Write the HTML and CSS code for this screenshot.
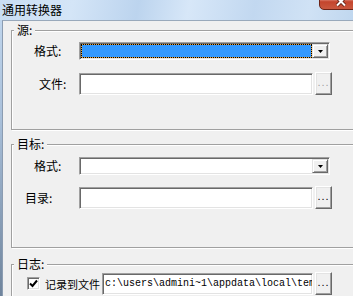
FILE: index.html
```html
<!DOCTYPE html>
<html lang="zh-CN">
<head>
    <meta charset="UTF-8">
    <title>通用转换器</title>
    <link rel="stylesheet" href="styles.css">
</head>
<body>

    <div class="window">
        <div class="titlebar">
            <span class="title">通用转换器</span>
            <span class="close-btn">
                <svg width="12" height="11" viewBox="0 0 12 11">
                    <path d="M2 1.5 L10 9.5 M10 1.5 L2 9.5" stroke="#5a1a0e" stroke-width="3.6" fill="none"/>
                    <path d="M2 1.5 L10 9.5 M10 1.5 L2 9.5" stroke="#ffffff" stroke-width="2" fill="none"/>
                </svg>
            </span>
        </div>

        <div class="client">
            <!-- 源 -->
            <div class="group group-src">
                <div class="legend">源:</div>
                <div class="row row-combo-src">
                    <span class="label label-format">格式:</span>
                    <div class="combo">
                        <div class="combo-value selected"></div>
                        <div class="combo-btn">
                            <svg width="5" height="3" viewBox="0 0 5 3"><polygon points="0,0 5,0 2.5,3" fill="#000"/></svg>
                        </div>
                    </div>
                </div>
                <div class="row row-edit-src">
                    <span class="label label-file">文件:</span>
                    <div class="edit"></div>
                    <button class="browse disabled">...</button>
                </div>
            </div>

            <!-- 目标 -->
            <div class="group group-dst">
                <div class="legend">目标:</div>
                <div class="row row-combo-dst">
                    <span class="label label-format">格式:</span>
                    <div class="combo">
                        <div class="combo-value"></div>
                        <div class="combo-btn">
                            <svg width="5" height="3" viewBox="0 0 5 3"><polygon points="0,0 5,0 2.5,3" fill="#000"/></svg>
                        </div>
                    </div>
                </div>
                <div class="row row-edit-dst">
                    <span class="label label-dir">目录:</span>
                    <div class="edit"></div>
                    <button class="browse">...</button>
                </div>
            </div>

            <!-- 日志 -->
            <div class="group group-log">
                <div class="legend">日志:</div>
                <div class="row row-log">
                    <span class="check">
                        <svg width="9" height="9" viewBox="0 0 9 9"><path d="M1 4.5 L3.5 7 L8 1.5" stroke="#000" stroke-width="2" fill="none"/></svg>
                    </span>
                    <span class="check-label">记录到文件</span>
                    <div class="edit edit-log">c:\users\admini~1\appdata\local\temp\convert.log</div>
                    <button class="browse">...</button>
                </div>
            </div>
        </div>
    </div>

</body>
</html>
```

FILE: styles.css
```css
/* Dialog "通用转换器" - gaya Windows 7 klasik */
html, body {
    margin: 0;
    padding: 0;
}

body {
    width: 353px;
    height: 296px;
    overflow: hidden;
    background: #f0f0f0;
    font-family: "Noto Sans CJK SC", sans-serif;
    font-size: 12px;
    color: #000;
}

.window {
    width: 362px;
    height: 296px;
    display: flex;
    flex-direction: column;
    background: linear-gradient(to bottom, #c3d9f0 0%, #a9c0da 40%, #6f849c 100%);
}

/* Title bar */
.titlebar {
    height: 20px;
    flex-shrink: 0;
    display: flex;
    align-items: flex-start;
    background: linear-gradient(100deg, #c8ddf3 0%, #d4e5f7 20%, #bcd4ee 38%, #d7e7f8 52%, #c2d8f0 70%, #d0e2f5 85%, #bdd5ee 100%);
}

.title {
    padding: 2px 0 0 2px;
    line-height: 16px;
    font-size: 12px;
}

.close-btn {
    margin-left: auto;
    margin-top: -8px;
    width: 43px;
    height: 18px;
    box-sizing: border-box;
    display: flex;
    align-items: center;
    justify-content: center;
    border: 1px solid #6d2417;
    border-radius: 0 0 5px 5px;
    background: linear-gradient(to bottom, #eaa89a 0%, #d5705c 45%, #c4452d 55%, #c9583f 100%);
}

/* Client area */
.client {
    flex: 1;
    margin-left: 2px;
    border-left: 1px solid #8b9cb1;
    border-top: 1px solid #99a9bb;
    background: #f0f0f0;
    padding: 9px 0 0 8px;
}

.group {
    width: 360px;
    box-sizing: border-box;
    border: 1px solid #a0a0a0;
    box-shadow: inset 1px 1px 0 #fff, 1px 1px 0 #fff;
}

.group-src {
    height: 100px;
}

.group-dst {
    height: 104px;
    margin-top: 14px;
}

.group-log {
    height: 60px;
    margin-top: 16px;
}

.legend {
    width: fit-content;
    margin: -7px 0 0 2px;
    padding: 0 3px;
    line-height: 12px;
    background: #f0f0f0;
}

.row {
    display: flex;
    align-items: center;
}

.row-combo-src { margin-top: 6px; }
.row-edit-src  { margin-top: 12px; }
.row-combo-dst { margin-top: 7px; }
.row-edit-dst  { margin-top: 11px; }
.row-log       { margin-top: 2px; }

.label {
    width: 67px;
    flex-shrink: 0;
    box-sizing: border-box;
    line-height: 14px;
}

.label-format { padding-left: 22px; }
.label-file   { padding-left: 27px; }
.label-dir    { padding-left: 13px; }

/* Combobox */
.combo {
    width: 251px;
    height: 18px;
    box-sizing: border-box;
    display: flex;
    background: #fff;
    border: 1px solid;
    border-color: #a0a0a0 #fff #fff #a0a0a0;
    box-shadow: inset 1px 1px 0 #696969, inset -1px -1px 0 #e3e3e3;
    padding: 1px;
}

.combo-value {
    flex: 1;
}

.combo-value.selected {
    border: 1px dotted #000;
    background: linear-gradient(#3399ff, #3399ff) padding-box, #e9a43a border-box;
}

.combo-btn {
    width: 16px;
    box-sizing: border-box;
    display: flex;
    align-items: center;
    justify-content: center;
    background: #f0f0f0;
    border: 1px solid;
    border-color: #e3e3e3 #696969 #696969 #e3e3e3;
    box-shadow: inset 1px 1px 0 #fff, inset -1px -1px 0 #a0a0a0;
}

/* Edit box */
.edit {
    width: 234px;
    height: 22px;
    box-sizing: border-box;
    background: #fff;
    border: 1px solid;
    border-color: #a0a0a0 #fff #fff #a0a0a0;
    box-shadow: inset 1px 1px 0 #696969, inset -1px -1px 0 #e3e3e3;
}

.edit-log {
    width: 211px;
    padding-left: 2px;
    font-family: "Liberation Mono", monospace;
    font-size: 10px;
    line-height: 20px;
    white-space: nowrap;
    overflow: hidden;
}

/* Tombol "..." */
.browse {
    width: 17px;
    height: 23px;
    margin-left: 2px;
    padding: 0 0 3px 0;
    box-sizing: border-box;
    display: flex;
    align-items: center;
    justify-content: center;
    font-family: "Liberation Sans", sans-serif;
    font-size: 11px;
    letter-spacing: 1px;
    color: #000;
    background: #f0f0f0;
    border: 1px solid;
    border-color: #fff #696969 #696969 #fff;
    box-shadow: inset -1px -1px 0 #a0a0a0, inset 1px 1px 0 #e3e3e3;
}

.browse.disabled {
    color: #a0a0a0;
}

/* Checkbox */
.check {
    width: 13px;
    height: 13px;
    margin-left: 15px;
    flex-shrink: 0;
    box-sizing: border-box;
    display: flex;
    align-items: center;
    justify-content: center;
    background: #fff;
    border: 1px solid;
    border-color: #a0a0a0 #fff #fff #a0a0a0;
    box-shadow: inset 1px 1px 0 #696969, inset -1px -1px 0 #e3e3e3;
}

.check-label {
    width: 62px;
    flex-shrink: 0;
    box-sizing: border-box;
    padding-left: 5px;
    font-size: 11px;
    line-height: 14px;
    white-space: nowrap;
}
```
